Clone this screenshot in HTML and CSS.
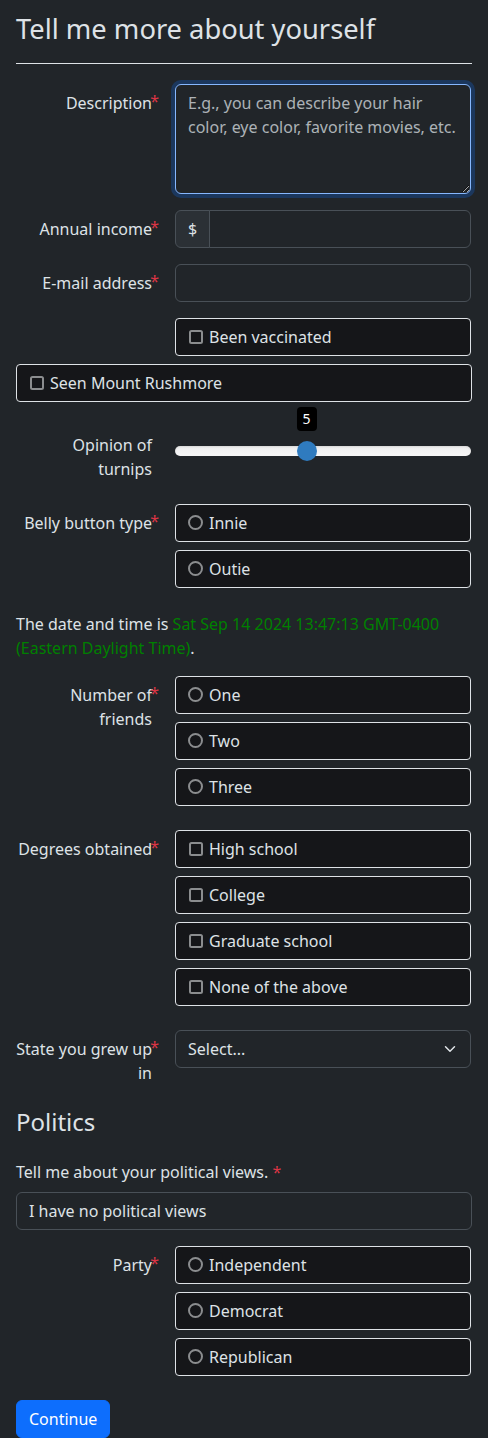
FILE: index.html
```html
<!DOCTYPE html>
<html lang="en">
<head>
<meta charset="utf-8">
<title>Tell me more about yourself</title>
<link rel="stylesheet" href="styles.css">
</head>
<body>
<div class="page">
  <h1 class="title">Tell me more about yourself</h1>
  <hr class="rule">
  <form class="survey">
    <div class="row">
      <label class="lbl" for="desc">Description<span class="req">*</span></label>
      <div class="ctl">
        <textarea id="desc" class="fc ta focused" rows="4" placeholder="E.g., you can describe your hair color, eye color, favorite movies, etc."></textarea>
      </div>
    </div>

    <div class="row">
      <label class="lbl" for="income">Annual income<span class="req">*</span></label>
      <div class="ctl">
        <div class="igroup">
          <span class="addon">$</span>
          <input id="income" class="fc grow" type="text">
        </div>
      </div>
    </div>

    <div class="row">
      <label class="lbl" for="email">E-mail address<span class="req">*</span></label>
      <div class="ctl">
        <input id="email" class="fc" type="email">
      </div>
    </div>

    <div class="row tight">
      <span class="lbl"></span>
      <div class="ctl">
        <label class="opt"><span class="cb"></span>Been vaccinated</label>
      </div>
    </div>

    <div class="full">
      <label class="opt"><span class="cb"></span>Seen Mount Rushmore</label>
    </div>

    <div class="row">
      <label class="lbl">Opinion of turnips</label>
      <div class="ctl">
        <div class="slider">
          <div class="tip" style="left:44.444%">5</div>
          <div class="thumb" style="left:44.444%"></div>
        </div>
      </div>
    </div>

    <div class="row">
      <span class="lbl">Belly button type<span class="req">*</span></span>
      <div class="ctl">
        <label class="opt"><span class="rd"></span>Innie</label>
        <label class="opt"><span class="rd"></span>Outie</label>
      </div>
    </div>

    <p class="datetime">The date and time is <span class="green">Sat Sep 14 2024 13:47:13 GMT-0400 (Eastern Daylight Time)</span>.</p>

    <div class="row">
      <span class="lbl">Number of friends<span class="req">*</span></span>
      <div class="ctl">
        <label class="opt"><span class="rd"></span>One</label>
        <label class="opt"><span class="rd"></span>Two</label>
        <label class="opt"><span class="rd"></span>Three</label>
      </div>
    </div>

    <div class="row">
      <span class="lbl">Degrees obtained<span class="req">*</span></span>
      <div class="ctl">
        <label class="opt"><span class="cb"></span>High school</label>
        <label class="opt"><span class="cb"></span>College</label>
        <label class="opt"><span class="cb"></span>Graduate school</label>
        <label class="opt"><span class="cb"></span>None of the above</label>
      </div>
    </div>

    <div class="row">
      <label class="lbl" for="state">State you grew up in<span class="req">*</span></label>
      <div class="ctl">
        <select id="state" class="fc sel">
          <option>Select...</option>
        </select>
      </div>
    </div>

    <h2 class="section">Politics</h2>

    <label class="toplbl" for="views">Tell me about your political views. <span class="req-inline">*</span></label>
    <input id="views" class="fc views" type="text" value="I have no political views">

    <div class="row">
      <span class="lbl">Party<span class="req">*</span></span>
      <div class="ctl">
        <label class="opt"><span class="rd"></span>Independent</label>
        <label class="opt"><span class="rd"></span>Democrat</label>
        <label class="opt"><span class="rd"></span>Republican</label>
      </div>
    </div>

    <button type="button" class="btn">Continue</button>
  </form>
</div>
</body>
</html>
```
FILE: styles.css
```css
html {
  color-scheme: dark;
}

body {
  margin: 0;
  background: #212529;
  color: #dee2e6;
  font-family: "Noto Sans", "Liberation Sans", sans-serif;
  font-size: 16px;
  line-height: 1.5;
}

.page {
  padding: 0 16px;
}

.title {
  font-size: 27.3px;
  font-weight: 400;
  line-height: 1.2;
  margin: 13px 0 17px;
}

.rule {
  border: 0;
  border-top: 1px solid #dee2e6;
  margin: 0 0 20px;
  height: 0;
}

.row {
  display: grid;
  grid-template-columns: 136px 296px;
  column-gap: 23px;
  margin-bottom: 16px;
  align-items: start;
}

.row.tight {
  margin-bottom: 0;
}

.full {
  display: flow-root;
  margin-bottom: 16px;
}

.lbl {
  position: relative;
  display: block;
  padding: 7px 0;
  text-align: right;
  line-height: 24px;
}

.req {
  position: absolute;
  top: 5px;
  right: -7px;
  color: #dc3545;
}

.req-inline {
  color: #dc3545;
}

.fc {
  display: block;
  width: 100%;
  box-sizing: border-box;
  padding: 6px 12px;
  font-family: inherit;
  font-size: 16px;
  line-height: 24px;
  color: #dee2e6;
  background: #212529;
  border: 1px solid #495057;
  border-radius: 6px;
  outline: none;
  margin: 0;
}

.fc::placeholder {
  color: rgba(222, 226, 230, 0.75);
}

.ta {
  height: 110px;
  resize: vertical;
}

.focused {
  border-color: #86b7fe;
  box-shadow: 0 0 0 4px rgba(13, 110, 253, 0.25);
}

.igroup {
  display: flex;
}

.addon {
  padding: 6px 12px;
  line-height: 24px;
  background: #2b3035;
  border: 1px solid #495057;
  border-radius: 6px 0 0 6px;
}

.grow {
  flex: 1;
  margin-left: -1px;
  border-radius: 0 6px 6px 0;
}

.opt {
  display: flex;
  align-items: center;
  gap: 6px;
  box-sizing: border-box;
  height: 38px;
  padding: 0 13px;
  margin-bottom: 8px;
  border: 1px solid #dee2e6;
  border-radius: 4px;
  background: #151619;
  color: #dee2e6;
}

.cb {
  width: 14px;
  height: 14px;
  box-sizing: border-box;
  border: 2px solid #8b8d8f;
  border-radius: 2.5px;
  flex: none;
}

.rd {
  width: 15px;
  height: 15px;
  box-sizing: border-box;
  border: 2px solid #8b8d8f;
  border-radius: 50%;
  flex: none;
  margin-left: -1px;
}

.slider {
  position: relative;
  height: 10px;
  margin-top: 20px;
  border-radius: 5px;
  background: linear-gradient(to bottom, #eeeeee, #f7f7f7);
  box-shadow: inset 0 1px 2px rgba(0, 0, 0, 0.1);
}

.thumb {
  position: absolute;
  top: -5px;
  width: 20px;
  height: 20px;
  margin-left: -10px;
  border-radius: 50%;
  background: #2f7bbf;
}

.tip {
  position: absolute;
  bottom: 25px;
  transform: translateX(-50%);
  background: #000;
  color: #fff;
  font-size: 14px;
  line-height: 20px;
  padding: 2px 6px;
  border-radius: 4px;
}

.datetime {
  margin: 0 0 16px;
}

.green {
  color: #008000;
}

.sel {
  appearance: none;
  -webkit-appearance: none;
  padding-right: 36px;
  background-image: url("data:image/svg+xml,%3csvg xmlns='http://www.w3.org/2000/svg' viewBox='0 0 16 16'%3e%3cpath fill='none' stroke='%23dee2e6' stroke-linecap='round' stroke-linejoin='round' stroke-width='2' d='m2 5 6 6 6-6'/%3e%3c/svg%3e");
  background-repeat: no-repeat;
  background-position: right 12px center;
  background-size: 16px 12px;
}

.section {
  font-size: 24px;
  font-weight: 400;
  line-height: 1.2;
  margin: 0 0 23px;
}

.toplbl {
  display: block;
  margin-bottom: 8px;
}

.views {
  margin-bottom: 16px;
}

.btn {
  display: inline-block;
  padding: 6px 12px;
  font-family: inherit;
  font-size: 16px;
  line-height: 24px;
  color: #fff;
  background: #0d6efd;
  border: 1px solid #0d6efd;
  border-radius: 6px;
}
```
